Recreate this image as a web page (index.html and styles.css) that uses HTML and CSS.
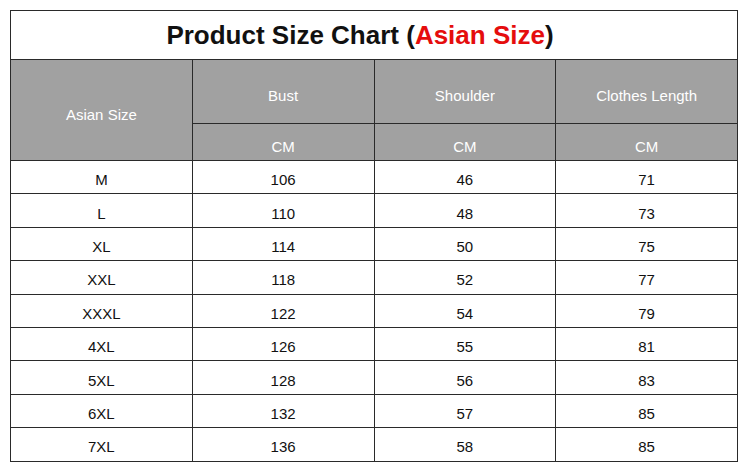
FILE: index.html
```html
<!DOCTYPE html>
<html>
<head>
<meta charset="utf-8">
<link rel="stylesheet" href="styles.css">
</head>
<body>
<table class="chart">
  <tr class="title-row">
    <td colspan="4" class="title">Product Size Chart (<span class="red">Asian Size</span>)</td>
  </tr>
  <tr class="head1">
    <th rowspan="2">Asian Size</th>
    <th>Bust</th>
    <th>Shoulder</th>
    <th>Clothes Length</th>
  </tr>
  <tr class="head2">
    <th>CM</th>
    <th>CM</th>
    <th>CM</th>
  </tr>
  <tr><td>M</td><td>106</td><td>46</td><td>71</td></tr>
  <tr><td>L</td><td>110</td><td>48</td><td>73</td></tr>
  <tr><td>XL</td><td>114</td><td>50</td><td>75</td></tr>
  <tr><td>XXL</td><td>118</td><td>52</td><td>77</td></tr>
  <tr><td>XXXL</td><td>122</td><td>54</td><td>79</td></tr>
  <tr><td>4XL</td><td>126</td><td>55</td><td>81</td></tr>
  <tr><td>5XL</td><td>128</td><td>56</td><td>83</td></tr>
  <tr><td>6XL</td><td>132</td><td>57</td><td>85</td></tr>
  <tr><td>7XL</td><td>136</td><td>58</td><td>85</td></tr>
</table>
</body>
</html>
```

FILE: styles.css
```css
html, body {
  margin: 0;
  padding: 0;
  background: #ffffff;
}
body {
  padding: 10px 0 0 10px;
  font-family: "Liberation Sans", Arial, sans-serif;
  color: #111111;
}
.chart {
  border-collapse: collapse;
  table-layout: fixed;
  width: 728px;
}
.chart td, .chart th {
  border: 1px solid #2a2a2a;
  width: 182px;
  padding: 0;
  text-align: center;
  font-size: 15px;
  font-weight: normal;
  height: 32px;
  padding-top: 4px;
  box-sizing: border-box;
}
.chart .title {
  height: 49px;
  font-size: 26px;
  font-weight: bold;
  color: #111111;
  padding-top: 0;
  padding-right: 28px;
}
.red {
  color: #e50d0d;
}
.chart th {
  background: #a1a1a1;
  color: #ffffff;
  padding-top: 8px;
}
.head1 th {
  height: 64px;
}
.head2 th {
  height: 37px;
  padding-top: 9px;
}
.chart td {
  height: 33.4px;
  padding-top: 5px;
}
.chart .title-row td {
  height: 49px;
  padding-top: 0;
}
```
